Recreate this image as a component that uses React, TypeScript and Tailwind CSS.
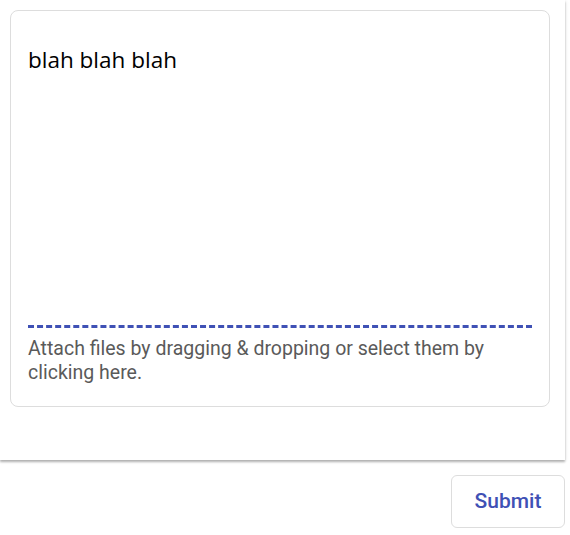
export default function App() {
  return (
    <div className="w-[570px] h-[535px] bg-white" style={{ fontFamily: "Roboto, sans-serif" }}>
      <div className="w-[565px] bg-white pt-[10px] px-[10px] pb-[53px] shadow-[0_2px_2px_rgba(0,0,0,0.25),0_1px_4px_rgba(0,0,0,0.12)]">
        <div className="w-[540px] h-[397px] border border-[#dddddd] rounded-[8px] px-[17px] pt-[33px] pb-[21px] flex flex-col">
          <div className="text-[22.5px] leading-[32px] text-black" style={{ fontFamily: '"Open Sans", sans-serif' }}>
            blah blah blah
          </div>
          <div className="flex-1" />
          <div className="border-t-[3px] border-dashed border-[#3f51b5]" />
          <div className="mt-[9px] text-[19.5px] leading-[24px] text-[#5a5a5a]">
            Attach files by dragging &amp; dropping or select them by clicking here.
          </div>
        </div>
      </div>
      <div className="flex justify-end pr-[5px] pt-[15px]">
        <button className="w-[114px] h-[53px] border border-[#dddddd] rounded-[6px] bg-white text-[21px] font-medium text-[#3f51b5]">
          Submit
        </button>
      </div>
    </div>
  );
}
